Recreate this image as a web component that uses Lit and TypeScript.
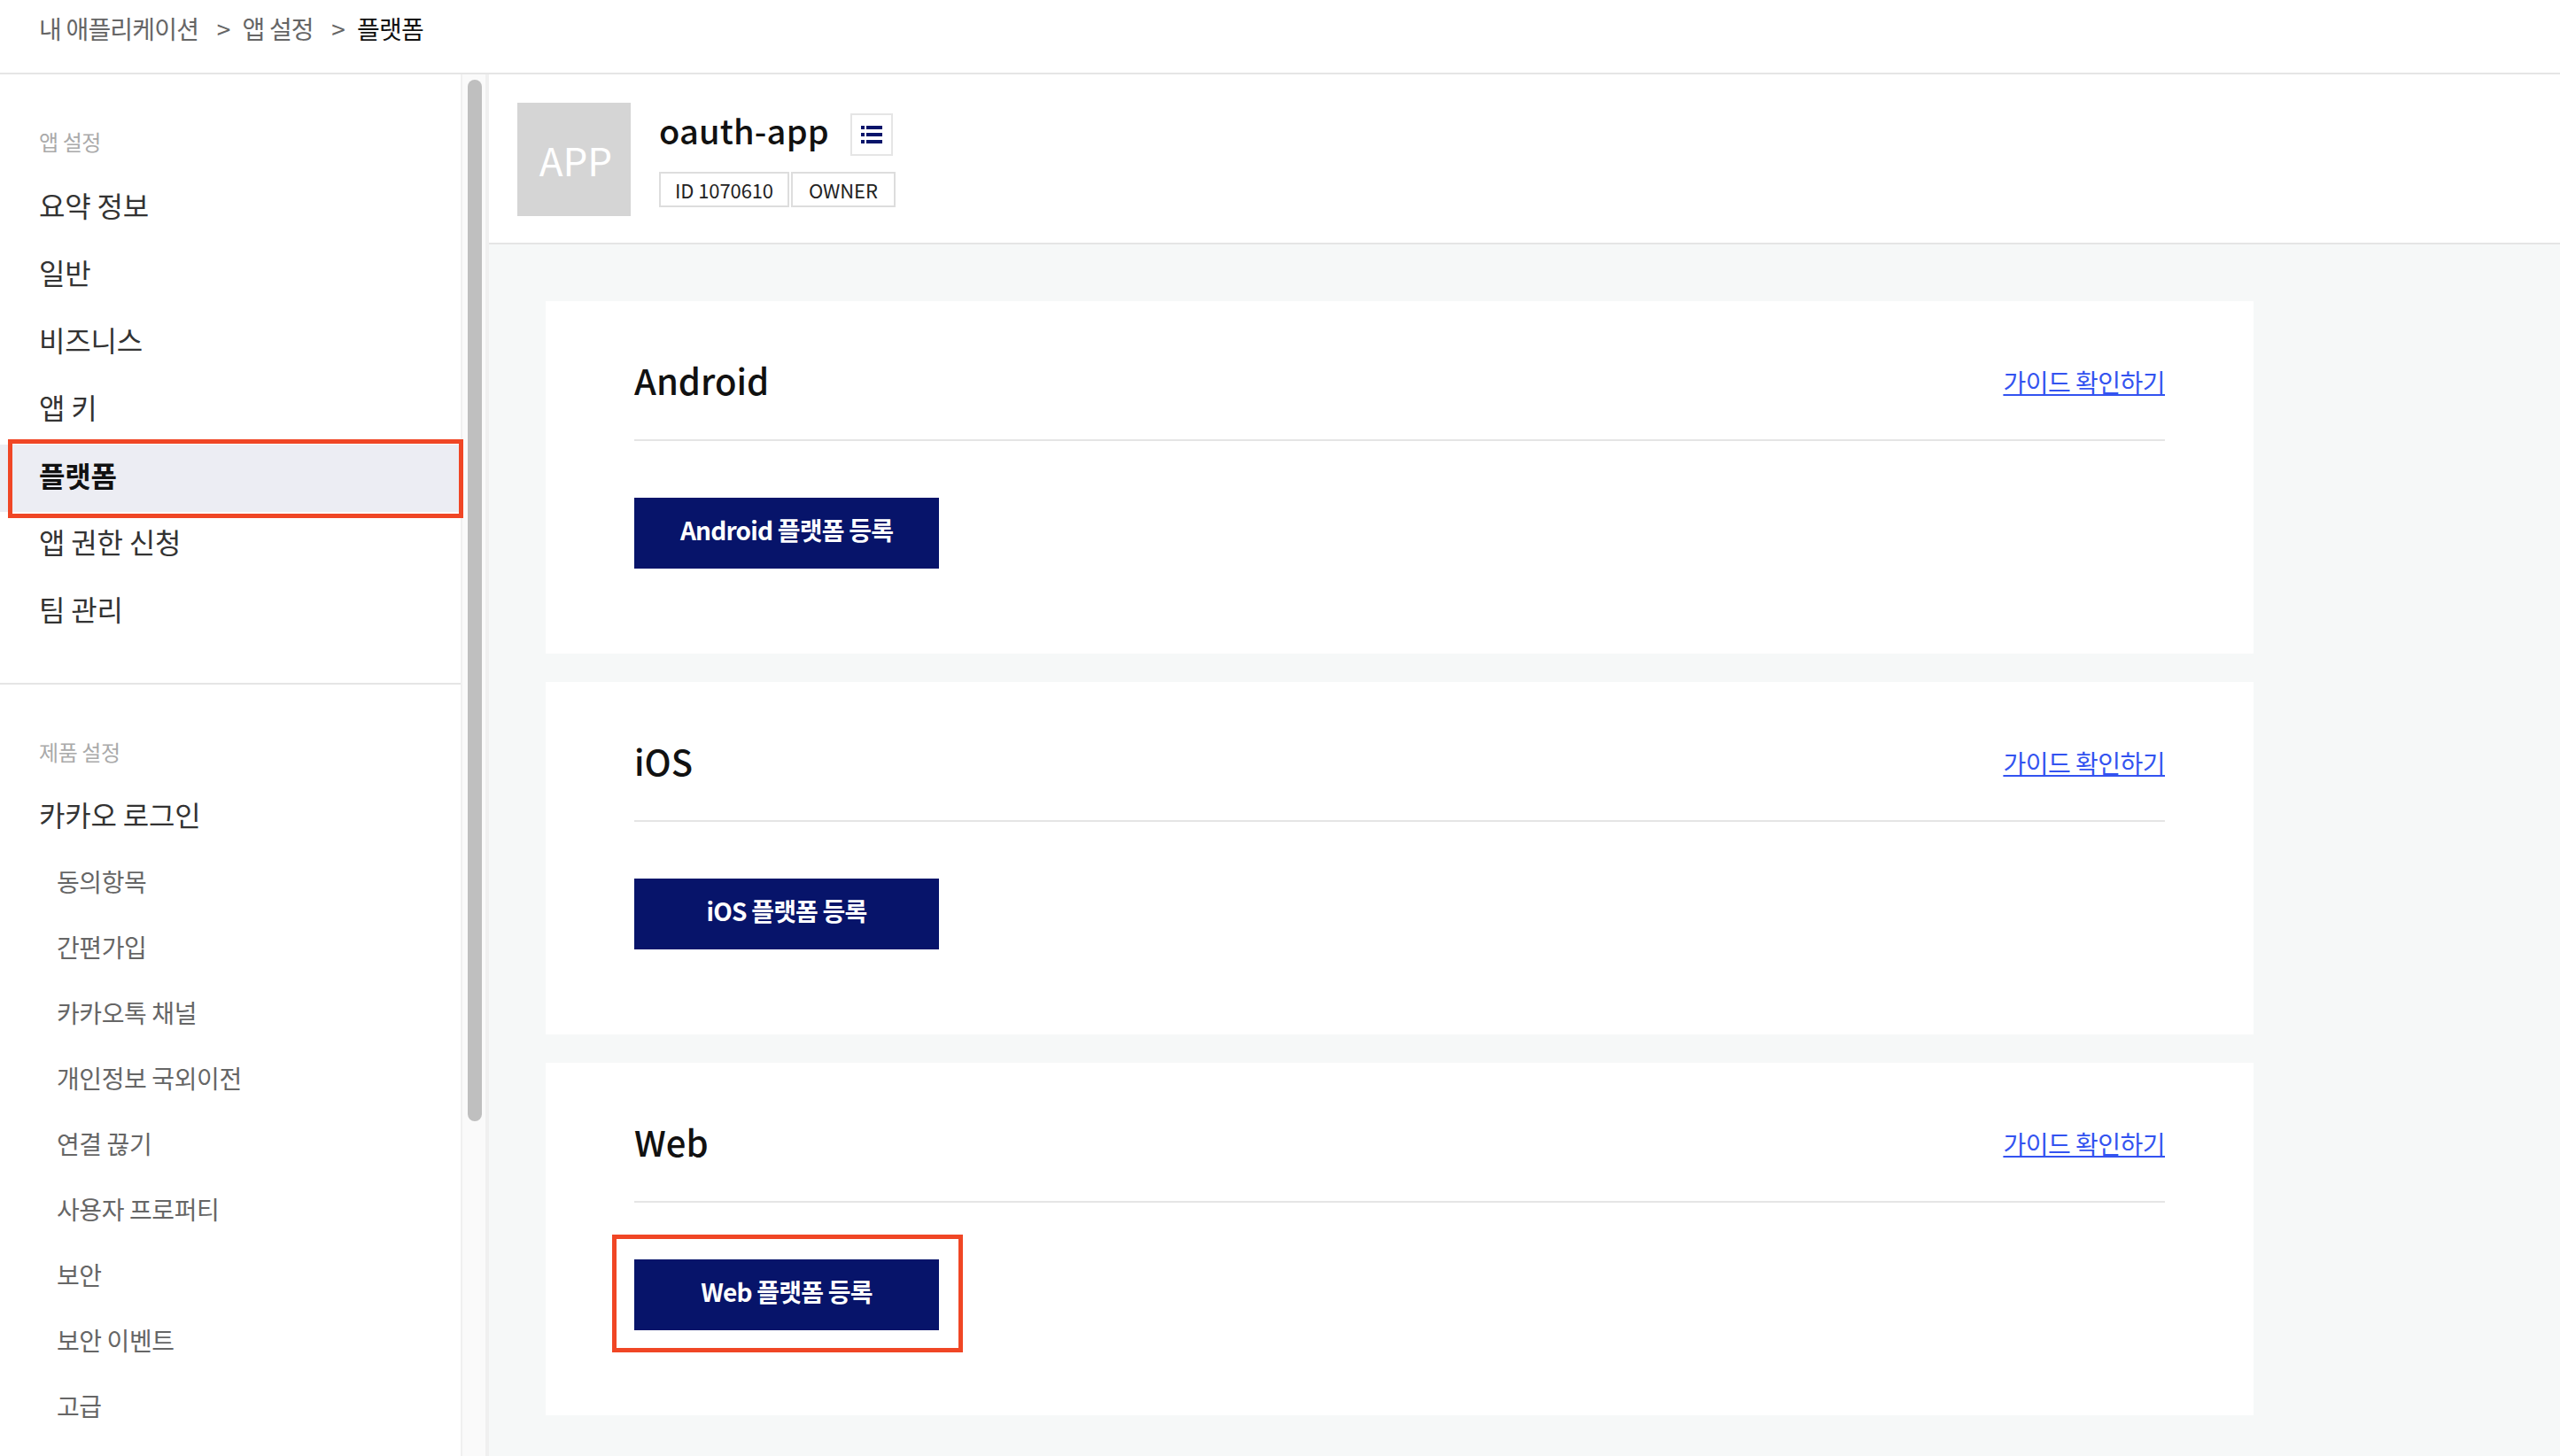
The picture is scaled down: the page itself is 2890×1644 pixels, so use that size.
import { LitElement, html, css, unsafeCSS } from "lit";
import { customElement } from "lit/decorators.js";

const FONT = unsafeCSS(`"Noto Sans CJK KR", "Noto Sans", sans-serif`);

const listIcon = html`<svg class="list-icon" width="24" height="20" viewBox="0 0 24 20" aria-hidden="true">
  <path fill="#07146a" d="M0 0h4v4H0zM6 0h18v4H6zM0 8h4v4H0zM6 8h18v4H6zM0 16h4v4H0zM6 16h18v4H6z"/>
</svg>`;

@customElement("app-root")
export class AppRoot extends LitElement {
  static styles = css`
    :host {
      display: block;
      width: 2890px;
      height: 1644px;
      overflow: hidden;
      background: #fff;
      font-family: ${FONT};
      color: #111;
    }
    * { box-sizing: border-box; }
    .topbar {
      height: 84px;
      border-bottom: 2px solid #e5e5e5;
      padding: 0 0 18px 44px;
      display: flex;
      align-items: center;
      font-size: 28px;
      letter-spacing: -0.8px;
      color: #666;
    }
    .topbar .sep { margin: 0 14px 0 20.5px; }
    .topbar .current { color: #111; }
    .body { display: flex; height: 1560px; }
    .sidebar {
      width: 522px;
      flex: none;
      border-right: 2px solid #f0f0f0;
      height: 100%;
    }
    .group { padding: 56px 0 41px; }
    .group + .group { border-top: 2px solid #e5e5e5; padding-top: 56px; }
    .label {
      padding-left: 44px;
      height: 40px;
      line-height: 40px;
      font-size: 24px;
      letter-spacing: -0.4px;
      color: #aaa;
      margin-bottom: 18px;
    }
    .group + .group .label { margin-bottom: 15px; }
    .item {
      position: relative;
      height: 76px;
      padding: 0 0 6px 44px;
      display: flex;
      align-items: center;
      font-size: 32px;
      letter-spacing: -0.2px;
      color: #333;
    }
    .group:first-child .item { padding-bottom: 10px; }
    .group:first-child .item.active { background: #ecedf3; font-weight: 700; color: #111; padding-bottom: 8px; }
    .sub {
      height: 74px;
      padding: 0 0 4px 64px;
      display: flex;
      align-items: center;
      font-size: 28px;
      letter-spacing: -0.4px;
      color: #666;
    }
    .mark {
      position: absolute;
      border: 5px solid #f04625;
      pointer-events: none;
    }
    .item .mark { left: 9px; right: -3px; top: -6px; bottom: -7px; }
    .track {
      flex: none;
      width: 30px;
      padding: 6px 4px 0 6px;
      border-right: 4px solid #f0f0f0;
      background: #fafafa;
    }
    .thumb {
      width: 16px;
      height: 1176px;
      background: #bfbfbf;
      border-radius: 8px;
    }
    .main { flex: 1; min-width: 0; background: #f6f8f8; }
    .app-head {
      height: 192px;
      background: #fff;
      border-bottom: 2px solid #e5e5e5;
      padding: 32px 0 0 32px;
      display: flex;
      gap: 32px;
    }
    .logo {
      width: 128px;
      height: 128px;
      background: #d5d5d5;
      color: #fff;
      font-size: 44px;
      display: flex;
      align-items: center;
      justify-content: center;
      padding: 0 0 0 4px;
    }
    .title-row { display: flex; align-items: center; height: 64px; margin-top: 2px; }
    .title { font-size: 38px; font-weight: 500; color: #111; letter-spacing: 0.2px; margin-bottom: 7px; }
    .icon-btn {
      width: 48px;
      height: 48px;
      margin: 4px 0 0 24px;
      border: 2px solid #e5e5e5;
      display: flex;
      align-items: center;
      justify-content: center;
    }
    .badges { display: flex; gap: 2px; margin-top: 12px; }
    .badge {
      height: 40px;
      border: 2px solid #ddd;
      padding: 0 16px;
      display: flex;
      align-items: center;
      font-size: 22px;
      letter-spacing: -0.1px;
      color: #222;
    }
    .badge + .badge { padding: 0 18px; }
    .cards {
      width: 1928px;
      margin-left: 64px;
      padding-top: 64px;
      display: flex;
      flex-direction: column;
      gap: 32px;
    }
    .card { height: 398px; background: #fff; padding: 0 100px; }
    .card-head {
      height: 158px;
      border-bottom: 2px solid #e5e5e5;
      display: flex;
      align-items: center;
      justify-content: space-between;
      padding-top: 22px;
    }
    .card-title { font-size: 40px; font-weight: 500; color: #111; }
    .guide { font-size: 28px; letter-spacing: -0.5px; color: #3353f0; text-decoration: underline; margin-top: 3px; }
    .btn-wrap { position: relative; width: 344px; margin-top: 64px; }
    .btn {
      display: block;
      width: 344px;
      height: 80px;
      background: #07146a;
      color: #fff;
      border: 0;
      padding: 0 0 8px;
      font: 700 28px ${FONT};
      letter-spacing: -0.8px;
    }
    .btn-wrap .mark { left: -25px; right: -27px; top: -28px; bottom: -25px; }
  `;

  render() {
    const top = ["요약 정보", "일반", "비즈니스", "앱 키", "플랫폼", "앱 권한 신청", "팀 관리"];
    const subs = ["동의항목", "간편가입", "카카오톡 채널", "개인정보 국외이전", "연결 끊기", "사용자 프로퍼티", "보안", "보안 이벤트", "고급"];
    const cards = [["Android", "Android 플랫폼 등록"], ["iOS", "iOS 플랫폼 등록"], ["Web", "Web 플랫폼 등록"]];
    return html`
      <header class="topbar">
        <span>내 애플리케이션</span><span class="sep">&gt;</span><span>앱 설정</span><span class="sep">&gt;</span><span class="current">플랫폼</span>
      </header>
      <div class="body">
        <nav class="sidebar">
          <section class="group">
            <div class="label">앱 설정</div>
            ${top.map((t) => html`<div class="item ${t === "플랫폼" ? "active" : ""}">${t}${t === "플랫폼" ? html`<span class="mark"></span>` : ""}</div>`)}
          </section>
          <section class="group">
            <div class="label">제품 설정</div>
            <div class="item">카카오 로그인</div>
            ${subs.map((t) => html`<div class="sub">${t}</div>`)}
          </section>
        </nav>
        <div class="track"><div class="thumb"></div></div>
        <main class="main">
          <div class="app-head">
            <div class="logo">APP</div>
            <div>
              <div class="title-row"><span class="title">oauth-app</span><span class="icon-btn">${listIcon}</span></div>
              <div class="badges"><span class="badge">ID 1070610</span><span class="badge">OWNER</span></div>
            </div>
          </div>
          <div class="cards">
            ${cards.map(([name, label]) => html`
              <section class="card">
                <div class="card-head"><span class="card-title">${name}</span><a class="guide">가이드 확인하기</a></div>
                <div class="btn-wrap"><button class="btn">${label}</button>${name === "Web" ? html`<span class="mark"></span>` : ""}</div>
              </section>`)}
          </div>
        </main>
      </div>
    `;
  }
}
